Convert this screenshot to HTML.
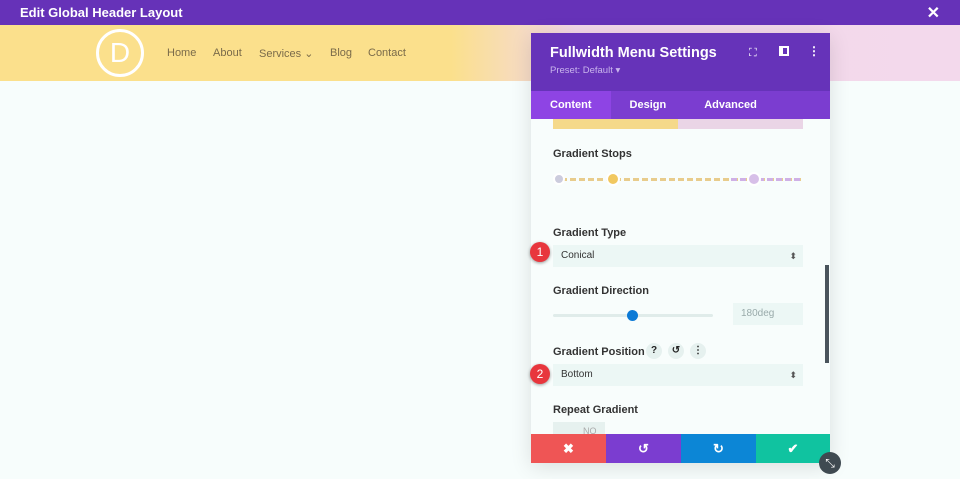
<!DOCTYPE html>
<html><head><style>
*{margin:0;padding:0;box-sizing:border-box}
body{width:960px;height:479px;overflow:hidden;background:#f7fdfc;font-family:"Liberation Sans",sans-serif;position:relative}
.top{position:absolute;left:0;top:0;width:960px;height:25px;background:#6632b8;color:#fff;font-weight:bold;font-size:13px;line-height:25px;padding-left:20px}
.hdr{position:absolute;left:0;top:25px;width:960px;height:56px;background:linear-gradient(90deg,#fbe08c 0%,#fbe08c 47%,#f3d8e9 60%,#f3d9ec 100%)}
.logo{position:absolute;left:96px;top:29px;width:48px;height:48px;border:3px solid #fff;border-radius:50%;color:#fff;font-size:28px;text-align:center;line-height:42px}
.nav{position:absolute;top:47px;font-size:11px;color:#7a6b4a}
.panel{position:absolute;left:531px;top:33px;width:299px;height:430px;background:#f8fdfc;box-shadow:0 4px 20px rgba(0,0,0,.12)}
.ph{height:58px;background:#6633b9;color:#fff;padding:12px 19px}
.ph h1{font-size:14.5px;font-weight:bold}
.ph p{font-size:9.5px;color:#c9b5ec;margin-top:4px}
.tabs{height:28px;background:#7b3dd0;color:#fff;font-size:11px;font-weight:bold;display:flex}
.tabs div{line-height:28px;padding:0 19px}
.lbl{position:absolute;left:22px;font-size:11px;font-weight:bold;color:#333}
.sel{position:absolute;left:22px;width:250px;height:22px;background:#ecf7f5;font-size:10px;color:#333;line-height:22px;padding-left:8px}
.sel:after{content:"⬍";position:absolute;right:6px;font-size:9px;color:#555}
.badge{position:absolute;width:20px;height:20px;border-radius:50%;background:#e8363d;color:#fff;font-size:12px;text-align:center;line-height:20px;box-shadow:0 1px 3px rgba(0,0,0,.4)}
.btn{position:absolute;top:401px;width:75px;height:29px;color:#fff;font-size:13px;text-align:center;line-height:29px;font-weight:bold}
.ic{position:absolute;top:310px;width:16px;height:16px;border-radius:50%;background:#e6f1ef;font-size:10px;font-weight:bold;text-align:center;line-height:16px;color:#222}
</style></head><body>
<div class="top">Edit Global Header Layout</div>
<div style="position:absolute;right:20px;top:3px;color:#fff;font-size:16px;font-weight:bold">✕</div>
<div class="hdr"></div>
<div class="logo">D</div>
<div class="nav" style="left:167px">Home</div>
<div class="nav" style="left:213px">About</div>
<div class="nav" style="left:259px">Services ⌄</div>
<div class="nav" style="left:330px">Blog</div>
<div class="nav" style="left:368px">Contact</div>
<div class="panel">
<div class="ph"><h1>Fullwidth Menu Settings</h1><p>Preset: Default ▾</p>
<div style="position:absolute;left:218px;top:14px;font-size:11px">⛶</div>
<div style="position:absolute;left:248px;top:13px;width:10px;height:10px;border:2px solid #fff;border-left-width:4px"></div>
<div style="position:absolute;left:277px;top:11px;font-size:12px;font-weight:bold">⋮</div>
</div>
<div class="tabs"><div style="background:#8e44e4">Content</div><div>Design</div><div>Advanced</div></div>
<div style="position:absolute;left:22px;top:86px;width:250px;height:10px;background:linear-gradient(90deg,#f5d98a 50%,#ead5e6 50%)"></div>
<div class="lbl" style="top:115px">Gradient Stops</div>
<div style="position:absolute;left:30px;top:145px;width:242px;height:3px;background:repeating-linear-gradient(90deg,#e8cc8c 0 6px,transparent 6px 9px)"></div>
<div style="position:absolute;left:200px;top:145px;width:72px;height:3px;background:repeating-linear-gradient(90deg,#cfb0e6 0 6px,transparent 6px 9px)"></div>
<div style="position:absolute;left:22px;top:140px;width:12px;height:12px;border-radius:50%;background:#ccd;border:2px solid #fff"></div>
<div style="position:absolute;left:75px;top:139px;width:14px;height:14px;border-radius:50%;background:#f1c860;border:2px solid #fff"></div>
<div style="position:absolute;left:216px;top:139px;width:14px;height:14px;border-radius:50%;background:#d7bfe8;border:2px solid #fff"></div>
<div class="lbl" style="top:194px">Gradient Type</div>
<div class="sel" style="top:212px">Conical</div>
<div class="lbl" style="top:252px">Gradient Direction</div>
<div style="position:absolute;left:22px;top:281px;width:160px;height:3px;background:#e0ecea;border-radius:2px"></div>
<div style="position:absolute;left:96px;top:277px;width:11px;height:11px;border-radius:50%;background:#0c7ad6"></div>
<div style="position:absolute;left:202px;top:270px;width:70px;height:22px;background:#ecf7f5;font-size:10px;color:#9aa;line-height:22px;padding-left:8px">180deg</div>
<div class="lbl" style="top:313px">Gradient Position</div>
<div class="ic" style="left:115px">?</div><div class="ic" style="left:137px">↺</div><div class="ic" style="left:159px">⋮</div>
<div class="sel" style="top:331px">Bottom</div>
<div class="lbl" style="top:371px">Repeat Gradient</div>
<div style="position:absolute;left:22px;top:389px;width:52px;height:14px;background:#e6f1ef;font-size:9px;color:#aaa;padding-left:30px;line-height:18px">NO</div>
<div style="position:absolute;left:294px;top:232px;width:4px;height:98px;background:#4a545c"></div>
<div class="btn" style="left:0;background:#ef5555">✖</div>
<div class="btn" style="left:75px;background:#7b3dd0">↺</div>
<div class="btn" style="left:150px;background:#0c86d6">↻</div>
<div class="btn" style="left:225px;width:74px;background:#10c3a0">✔</div>
</div>
<div style="position:absolute;left:819px;top:452px;width:22px;height:22px;border-radius:50%;background:#3f4a51;color:#fff;font-size:12px;text-align:center;line-height:22px">⤡</div>
<div class="badge" style="left:530px;top:242px">1</div>
<div class="badge" style="left:530px;top:364px">2</div>
</body></html>
